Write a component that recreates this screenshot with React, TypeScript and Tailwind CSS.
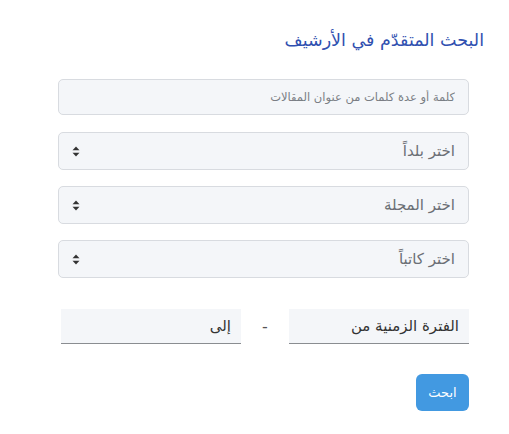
import { useState } from 'react'

const box = 'w-full rounded-[5px] border border-[#d8dbe0] bg-[#f4f6f9] px-[13px] outline-none'

function SortIcon() {
  return (
    <svg width="8" height="11" viewBox="0 0 8 11" className="shrink-0">
      <path d="M4 0.5 L7.5 4.3 H0.5 Z" fill="#333" />
      <path d="M4 10.5 L7.5 6.7 H0.5 Z" fill="#333" />
    </svg>
  )
}

function FakeSelect({ label }: { label: string }) {
  return (
    <div className={`${box} flex h-[38px] items-center justify-between text-[15px] text-[#6b6f75]`}>
      <span>{label}</span>
      <SortIcon />
    </div>
  )
}

export default function App() {
  const [query, setQuery] = useState('')

  return (
    <div
      dir="rtl"
      className="min-h-screen bg-white pt-[27px] pr-[40px] pl-[40px]"
      style={{ fontFamily: '"DejaVu Sans", "Noto Sans", sans-serif' }}
    >
      <h1 className="-mr-[15px] text-[17.5px] leading-[26px] text-[#3050b0]">
        البحث المتقدّم في الأرشيف
      </h1>

      <form className="mt-[26px] flex w-[411px] flex-col" onSubmit={(e) => e.preventDefault()}>
        <input
          value={query}
          onChange={(e) => setQuery(e.target.value)}
          placeholder="كلمة أو عدة كلمات من عنوان المقالات"
          className={`${box} h-[36px] text-[11.5px] text-[#333] placeholder:text-[#7a7e84]`}
        />

        <div className="mt-[17px] flex flex-col gap-[16px]">
          <FakeSelect label="اختر بلداً" />
          <FakeSelect label="اختر المجلة" />
          <FakeSelect label="اختر كاتباً" />
        </div>

        <div className="mt-[31px] flex items-center">
          <input
            placeholder="الفترة الزمنية من"
            className="h-[35px] w-[180px] border-b border-[#8a8d91] bg-[#f4f6f9] px-[10px] text-[15px] text-[#333] outline-none placeholder:text-[#333]"
          />
          <span className="mx-[19px] w-[10px] text-center text-[#555]">-</span>
          <input
            placeholder="إلى"
            className="h-[35px] w-[180px] border-b border-[#8a8d91] bg-[#f4f6f9] px-[10px] text-[15px] text-[#333] outline-none placeholder:text-[#333]"
          />
        </div>

        <div className="mt-[30px] flex">
          <button
            type="submit"
            className="h-[37px] w-[53px] rounded-[6px] bg-[#4299e1] text-[13px] text-white"
          >
            ابحث
          </button>
        </div>
      </form>
    </div>
  )
}
